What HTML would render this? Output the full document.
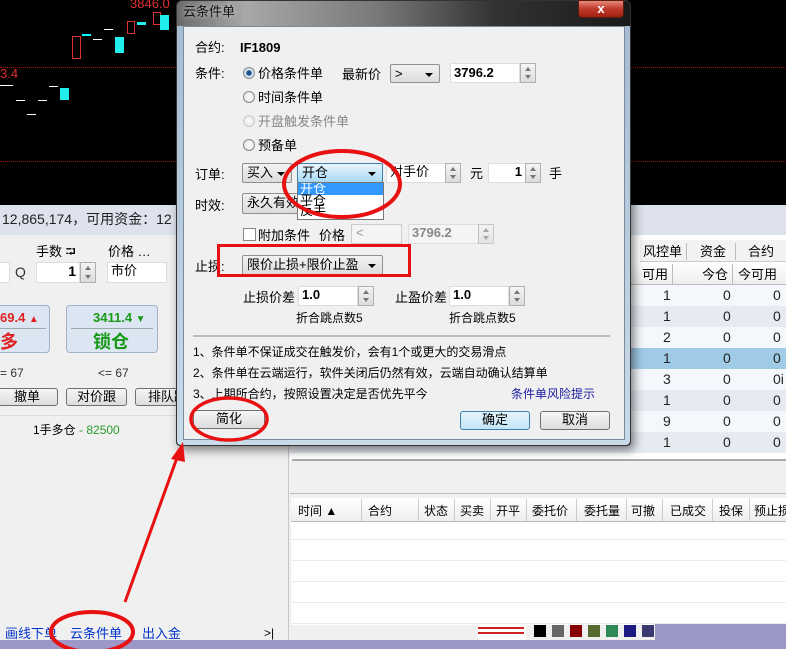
<!DOCTYPE html>
<html><head><meta charset="utf-8"><style>
*{margin:0;padding:0;box-sizing:border-box}
body{width:786px;height:649px;position:relative;overflow:hidden;background:#f0f0f0;font-family:"Liberation Sans","Noto Sans CJK SC",sans-serif;font-size:12px;color:#000;line-height:1.2}
.a{position:absolute;white-space:nowrap}
.inp{position:absolute;background:#fff;border:1px solid #c8c8c8}
.spin{position:absolute;width:16px;border:1px solid #b0b0b0;background:linear-gradient(#f4f4f4,#dcdcdc)}
.spin:before{content:"";position:absolute;left:4px;top:3px;border:3px solid transparent;border-bottom:4px solid #777;border-top:0}
.spin:after{content:"";position:absolute;left:4px;bottom:3px;border:3px solid transparent;border-top:4px solid #777;border-bottom:0}
.sel{position:absolute;border:1px solid #8e8f8f;border-radius:2px;background:linear-gradient(#f2f2f2,#dcdcdc);padding:1px 4px;font-size:13px}
.sel:after{content:"";position:absolute;right:6px;top:8px;border:4px solid transparent;border-top:4px solid #000;border-bottom:0}
.btn{position:absolute;border:1px solid #707070;border-radius:3px;background:linear-gradient(#f6f6f6,#dddddd);text-align:center;font-size:13px}
.radio{position:absolute;width:12px;height:12px;border-radius:50%;border:1px solid #8a8a8a;background:radial-gradient(#fff,#ddd)}
.row{position:absolute;left:290px;width:496px;height:21px;font-size:14px;color:#222}
.row span{position:absolute;top:2px}
</style></head><body>
<div class="a" style="left:0;top:0;width:786px;height:205px;background:#000"></div>
<div class="a" style="left:0;top:67px;width:786px;border-top:1px dotted #a01010"></div>
<div class="a" style="left:0;top:161px;width:786px;border-top:1px dotted #a01010"></div>
<div class="a" style="left:130px;top:-4px;color:#e03030;font-size:13px">3846.0</div>
<div class="a" style="left:0;top:66px;color:#e03030;font-size:13px">3.4</div>
<div class="a" style="left:72px;top:36px;width:9px;height:23px;border:1px solid #e03030"></div>
<div class="a" style="left:82px;top:34px;width:9px;height:2px;background:#0ff"></div>
<div class="a" style="left:93px;top:39px;width:9px;height:1px;background:#fff"></div>
<div class="a" style="left:104px;top:29px;width:9px;height:1px;background:#fff"></div>
<div class="a" style="left:115px;top:37px;width:9px;height:16px;background:#2ee"></div>
<div class="a" style="left:127px;top:21px;width:8px;height:13px;border:1px solid #e03030"></div>
<div class="a" style="left:137px;top:22px;width:9px;height:3px;background:#2ee"></div>
<div class="a" style="left:153px;top:12px;width:8px;height:13px;border:1px solid #e03030"></div>
<div class="a" style="left:160px;top:15px;width:9px;height:15px;background:#2ee"></div>
<div class="a" style="left:0;top:85px;width:13px;height:1px;background:#fff"></div>
<div class="a" style="left:16px;top:100px;width:9px;height:1px;background:#fff"></div>
<div class="a" style="left:27px;top:114px;width:9px;height:1px;background:#fff"></div>
<div class="a" style="left:38px;top:100px;width:9px;height:1px;background:#fff"></div>
<div class="a" style="left:49px;top:86px;width:9px;height:1px;background:#fff"></div>
<div class="a" style="left:60px;top:88px;width:9px;height:12px;background:#2ee"></div>
<div class="a" style="left:0;top:205px;width:786px;height:30px;background:#dde2ec"></div>
<div class="a" style="left:2px;top:211px;font-size:14px;color:#222">12,865,174，可用资金：12</div>
<div class="a" style="left:36px;top:244px;font-size:13px">手数 ⮒</div>
<div class="a" style="left:108px;top:244px;font-size:13px">价格 …</div>
<div class="inp" style="left:-2px;top:262px;width:12px;height:21px;border-color:#ddd"></div>
<div class="a" style="left:15px;top:264px;font-size:14px;color:#333">Q</div>
<div class="inp" style="left:36px;top:262px;width:44px;height:21px;border-color:#ddd;text-align:right;padding-right:3px;font-weight:bold;font-size:14px">1</div>
<div class="spin" style="left:80px;top:262px;height:21px"></div>
<div class="inp" style="left:107px;top:262px;width:60px;height:21px;border-color:#ddd;font-size:13px;padding-left:3px">市价</div>
<div class="a" style="left:-10px;top:305px;width:60px;height:48px;background:#dce6f2;border:1px solid #9fb3cc;border-radius:4px"></div>
<div class="a" style="left:0;top:310px;color:#e02020;font-weight:bold;font-size:13px">69.4 <span style="font-size:10px">▲</span></div>
<div class="a" style="left:-4px;top:328px;width:50px;border-top:1px solid #9aa;"></div>
<div class="a" style="left:0;top:332px;color:#e02020;font-weight:bold;font-size:18px">多</div>
<div class="a" style="left:66px;top:305px;width:92px;height:48px;background:#dce6f2;border:1px solid #9fb3cc;border-radius:4px"></div>
<div class="a" style="left:93px;top:310px;color:#1a9a1a;font-weight:bold;font-size:13px">3411.4 <span style="font-size:10px">▼</span></div>
<div class="a" style="left:71px;top:328px;width:82px;border-top:1px solid #9aa"></div>
<div class="a" style="left:93px;top:332px;color:#1a9a1a;font-weight:bold;font-size:18px">锁仓</div>
<div class="a" style="left:0;top:366px;font-size:12px;color:#333">= 67</div>
<div class="a" style="left:98px;top:366px;font-size:12px;color:#333">&lt;= 67</div>
<div class="btn" style="left:-4px;top:388px;width:62px;height:18px">撤单</div>
<div class="btn" style="left:66px;top:388px;width:61px;height:18px">对价跟</div>
<div class="btn" style="left:135px;top:388px;width:60px;height:18px;text-align:left;padding-left:12px">排队跟</div>
<div class="a" style="left:0;top:415px;width:288px;border-top:1px solid #ddd"></div>
<div class="a" style="left:33px;top:423px;font-size:12px">1手多仓 <span style="color:#2a9a2a">- 82500</span></div>
<div class="a" style="left:288px;top:235px;width:1px;height:405px;background:#c8c8c8"></div>
<div class="a" style="left:5px;top:626px;color:#0033cc;font-size:13px">画线下单</div>
<div class="a" style="left:70px;top:626px;color:#0033cc;font-size:13px">云条件单</div>
<div class="a" style="left:142px;top:626px;color:#0033cc;font-size:13px">出入金</div>
<div class="a" style="left:264px;top:626px;font-size:12px">&gt;|</div>
<div class="a" style="left:290px;top:235px;width:496px;height:225px;background:#fff"></div>
<div class="a" style="left:640px;top:240px;width:146px;height:22px;background:#f2f2f2;border-bottom:1px solid #ccc"></div>
<div class="a" style="left:643px;top:244px;font-size:13px">风控单</div>
<div class="a" style="left:686px;top:243px;width:1px;height:17px;background:#bbb"></div>
<div class="a" style="left:700px;top:244px;font-size:13px">资金</div>
<div class="a" style="left:735px;top:243px;width:1px;height:17px;background:#bbb"></div>
<div class="a" style="left:748px;top:244px;font-size:13px">合约</div>
<div class="a" style="left:290px;top:263px;width:496px;height:22px;background:linear-gradient(#fff,#eee);border-bottom:1px solid #bbb"></div>
<div class="a" style="left:642px;top:267px;font-size:13px">可用</div>
<div class="a" style="left:672px;top:264px;width:1px;height:20px;background:#bbb"></div>
<div class="a" style="left:702px;top:267px;font-size:13px">今仓</div>
<div class="a" style="left:732px;top:264px;width:1px;height:20px;background:#bbb"></div>
<div class="a" style="left:738px;top:267px;font-size:13px">今可用</div>
<div class="row" style="top:285px;background:#f4f8fd"><span style="left:373px">1</span><span style="left:433px">0</span><span style="left:483px">0</span></div>
<div class="row" style="top:306px;background:#e6ebf2"><span style="left:373px">1</span><span style="left:433px">0</span><span style="left:483px">0</span></div>
<div class="row" style="top:327px;background:#f4f8fd"><span style="left:373px">2</span><span style="left:433px">0</span><span style="left:483px">0</span></div>
<div class="row" style="top:348px;background:#9fcbe6"><span style="left:373px">1</span><span style="left:433px">0</span><span style="left:483px">0</span></div>
<div class="row" style="top:369px;background:#f4f8fd"><span style="left:373px">3</span><span style="left:433px">0</span><span style="left:483px">0i</span></div>
<div class="row" style="top:390px;background:#e6ebf2"><span style="left:373px">1</span><span style="left:433px">0</span><span style="left:483px">0</span></div>
<div class="row" style="top:411px;background:#f4f8fd"><span style="left:373px">9</span><span style="left:433px">0</span><span style="left:483px">0</span></div>
<div class="row" style="top:432px;background:#e6ebf2"><span style="left:373px">1</span><span style="left:433px">0</span><span style="left:483px">0</span></div>
<div class="a" style="left:292px;top:459px;width:494px;border-top:2px solid #aaa"></div>
<div class="a" style="left:290px;top:462px;width:496px;height:32px;background:#f0f0f0"></div>
<div class="a" style="left:290px;top:493px;width:496px;border-top:1px solid #bbb"></div>
<div class="a" style="left:291px;top:498px;width:495px;height:127px;background:#fff;background-image:repeating-linear-gradient(#fff 0 20px,#e8ecf2 20px 21px)"></div>
<div class="a" style="left:291px;top:498px;width:495px;height:24px;background:linear-gradient(#fff,#eee);border-bottom:1px solid #bbb;font-size:12px">
<span class="a" style="left:7px;top:6px">时间 ▲</span><span class="a" style="left:70px;top:1px;height:22px;border-left:1px solid #ccc"></span>
<span class="a" style="left:77px;top:6px">合约</span><span class="a" style="left:127px;top:1px;height:22px;border-left:1px solid #ccc"></span>
<span class="a" style="left:133px;top:6px">状态</span><span class="a" style="left:163px;top:1px;height:22px;border-left:1px solid #ccc"></span>
<span class="a" style="left:169px;top:6px">买卖</span><span class="a" style="left:199px;top:1px;height:22px;border-left:1px solid #ccc"></span>
<span class="a" style="left:205px;top:6px">开平</span><span class="a" style="left:235px;top:1px;height:22px;border-left:1px solid #ccc"></span>
<span class="a" style="left:241px;top:6px">委托价</span><span class="a" style="left:285px;top:1px;height:22px;border-left:1px solid #ccc"></span>
<span class="a" style="left:293px;top:6px">委托量</span><span class="a" style="left:335px;top:1px;height:22px;border-left:1px solid #ccc"></span>
<span class="a" style="left:340px;top:6px">可撤</span><span class="a" style="left:371px;top:1px;height:22px;border-left:1px solid #ccc"></span>
<span class="a" style="left:379px;top:6px">已成交</span><span class="a" style="left:421px;top:1px;height:22px;border-left:1px solid #ccc"></span>
<span class="a" style="left:428px;top:6px">投保</span><span class="a" style="left:458px;top:1px;height:22px;border-left:1px solid #ccc"></span>
<span class="a" style="left:463px;top:6px">预止损</span></div>
<div class="a" style="left:478px;top:624px;width:48px;height:16px;background:#fff"></div>
<div class="a" style="left:478px;top:627px;width:46px;height:2px;background:#c22"></div>
<div class="a" style="left:478px;top:632px;width:46px;height:2px;background:#c22"></div>
<div class="a" style="left:534px;top:625px;width:12px;height:12px;background:#000"></div>
<div class="a" style="left:552px;top:625px;width:12px;height:12px;background:#666"></div>
<div class="a" style="left:570px;top:625px;width:12px;height:12px;background:#800"></div>
<div class="a" style="left:588px;top:625px;width:12px;height:12px;background:#556b2f"></div>
<div class="a" style="left:606px;top:625px;width:12px;height:12px;background:#2e8b57"></div>
<div class="a" style="left:624px;top:625px;width:12px;height:12px;background:#1a1a80"></div>
<div class="a" style="left:642px;top:625px;width:12px;height:12px;background:#3a3a70"></div>
<div class="a" style="left:655px;top:624px;width:131px;height:16px;background:#9b98c9"></div>
<div class="a" style="left:0;top:640px;width:786px;height:9px;background:#9b98c9"></div>
<div class="a" style="left:176px;top:0;width:455px;height:446px;background:linear-gradient(to right,#6a6a6a,#a8a8a8 15%,#777 45%,#333 70%,#1a1a1a);border:1px solid #333;border-radius:6px 6px 4px 4px;box-shadow:3px 4px 10px rgba(0,0,0,.5)"></div>
<div class="a" style="left:177px;top:26px;width:453px;height:419px;background:linear-gradient(#a6bcd2,#c9dbe9);border-radius:0 0 4px 4px"></div>
<div class="a" style="left:183px;top:4px;font-size:13px;color:#111;text-shadow:0 0 6px #ddd">云条件单</div>
<div class="a" style="left:578px;top:0;width:46px;height:18px;background:linear-gradient(#e88a7a,#c0392b 50%,#a02010);border:1px solid #5a1a10;border-radius:0 0 4px 4px;color:#fff;text-align:center;font-weight:bold;font-size:13px;line-height:16px">x</div>
<div class="a" style="left:183px;top:26px;width:442px;height:414px;background:#f0f0f0;border:1px solid #7a8a9a"></div>
<div class="a" style="left:195px;top:40px;font-size:13px">合约:</div>
<div class="a" style="left:240px;top:40px;font-size:13px;font-weight:bold">IF1809</div>
<div class="a" style="left:195px;top:66px;font-size:13px">条件:</div>
<div class="radio" style="left:243px;top:67px;background:radial-gradient(#1a4f8a 30%,#cde 45%,#eee)"></div>
<div class="a" style="left:258px;top:66px;font-size:13px">价格条件单</div>
<div class="a" style="left:342px;top:67px;font-size:13px">最新价</div>
<div class="sel" style="left:390px;top:64px;width:50px;height:19px">&gt;</div>
<div class="inp" style="left:450px;top:63px;width:70px;height:20px;border-color:#ddd;font-weight:bold;font-size:13px;padding-left:3px;line-height:18px">3796.2</div>
<div class="spin" style="left:520px;top:63px;height:20px"></div>
<div class="radio" style="left:243px;top:91px"></div>
<div class="a" style="left:258px;top:90px;font-size:13px">时间条件单</div>
<div class="radio" style="left:243px;top:115px;border-color:#ccc"></div>
<div class="a" style="left:258px;top:114px;font-size:13px;color:#888">开盘触发条件单</div>
<div class="radio" style="left:243px;top:139px"></div>
<div class="a" style="left:258px;top:138px;font-size:13px">预备单</div>
<div class="a" style="left:195px;top:167px;font-size:13px">订单:</div>
<div class="sel" style="left:242px;top:163px;width:50px;height:20px">买入</div>
<div class="inp" style="left:386px;top:163px;width:60px;height:20px;border-color:#ddd;font-size:13px;padding-left:3px">对手价</div>
<div class="spin" style="left:445px;top:163px;height:20px"></div>
<div class="a" style="left:470px;top:166px;font-size:13px">元</div>
<div class="inp" style="left:488px;top:163px;width:38px;height:20px;border-color:#ddd;text-align:right;padding-right:3px;font-weight:bold;font-size:13px">1</div>
<div class="spin" style="left:525px;top:163px;height:20px"></div>
<div class="a" style="left:549px;top:166px;font-size:13px">手</div>
<div class="a" style="left:195px;top:198px;font-size:13px">时效:</div>
<div class="sel" style="left:242px;top:193px;width:70px;height:21px">永久有效</div>
<div class="sel" style="left:297px;top:163px;width:86px;height:20px;border-color:#3c7fb1;background:linear-gradient(#eaf6fd,#a7d9f5)">开仓</div>
<div class="a" style="left:297px;top:182px;width:87px;height:38px;background:#fff;border:1px solid #777;font-size:13px;line-height:12px;overflow:hidden">
<div style="background:#3399ff;color:#fff;height:12px;padding-left:2px">开仓</div><div style="padding-left:2px">平仓</div><div style="padding-left:2px;margin-top:-2px">反手</div></div>
<div class="a" style="left:243px;top:228px;width:13px;height:13px;border:1px solid #888;background:#fff"></div>
<div class="a" style="left:258px;top:228px;font-size:13px">附加条件</div>
<div class="a" style="left:319px;top:228px;font-size:13px">价格</div>
<div class="a" style="left:351px;top:224px;width:51px;height:20px;border:1px solid #ccc;background:#f4f4f4;color:#999;padding-left:4px;font-size:13px">&lt;</div>
<div class="inp" style="left:408px;top:224px;width:71px;height:20px;border-color:#ddd;background:#f4f4f4;color:#888;font-weight:bold;font-size:13px;padding-left:3px">3796.2</div>
<div class="spin" style="left:478px;top:224px;height:20px;opacity:.6"></div>
<div class="a" style="left:195px;top:259px;font-size:13px">止损:</div>
<div class="sel" style="left:242px;top:255px;width:141px;height:20px">限价止损+限价止盈</div>
<div class="a" style="left:217px;top:244px;width:194px;height:33px;border:3px solid #e81010"></div>
<div class="a" style="left:243px;top:290px;font-size:13px">止损价差</div>
<div class="inp" style="left:298px;top:286px;width:60px;height:20px;border-color:#ddd;font-weight:bold;font-size:13px;padding-left:3px">1.0</div>
<div class="spin" style="left:358px;top:286px;height:20px"></div>
<div class="a" style="left:395px;top:290px;font-size:13px">止盈价差</div>
<div class="inp" style="left:449px;top:286px;width:60px;height:20px;border-color:#ddd;font-weight:bold;font-size:13px;padding-left:3px">1.0</div>
<div class="spin" style="left:509px;top:286px;height:20px"></div>
<div class="a" style="left:296px;top:311px;font-size:12px">折合跳点数5</div>
<div class="a" style="left:449px;top:311px;font-size:12px">折合跳点数5</div>
<div class="a" style="left:193px;top:335px;width:417px;height:2px;background:#bbb"></div>
<div class="a" style="left:193px;top:345px;font-size:12px">1、条件单不保证成交在触发价，会有1个或更大的交易滑点</div>
<div class="a" style="left:193px;top:366px;font-size:12px">2、条件单在云端运行，软件关闭后仍然有效，云端自动确认结算单</div>
<div class="a" style="left:193px;top:387px;font-size:12px">3、上期所合约，按照设置决定是否优先平今</div>
<div class="a" style="left:511px;top:387px;font-size:12px;color:#1a1aa0">条件单风险提示</div>
<div class="btn" style="left:193px;top:410px;width:72px;height:19px">简化</div>
<div class="btn" style="left:460px;top:411px;width:70px;height:19px;border-color:#3c7fb1;background:linear-gradient(#e5f4fc,#c4e5f6)">确定</div>
<div class="btn" style="left:540px;top:411px;width:70px;height:19px">取消</div>
<svg class="a" style="left:0;top:0" width="786" height="649">
<ellipse cx="342" cy="184" rx="58" ry="33" fill="none" stroke="#e81010" stroke-width="4"/>
<ellipse cx="229" cy="419" rx="38" ry="21" fill="none" stroke="#e81010" stroke-width="3.5"/>
<ellipse cx="92" cy="632" rx="41" ry="20" fill="none" stroke="#e81010" stroke-width="4"/>
<line x1="125" y1="602" x2="178" y2="455" stroke="#e81010" stroke-width="3"/>
<polygon points="183,442 171,459 185,462" fill="#e81010"/>
</svg>
</body></html>
